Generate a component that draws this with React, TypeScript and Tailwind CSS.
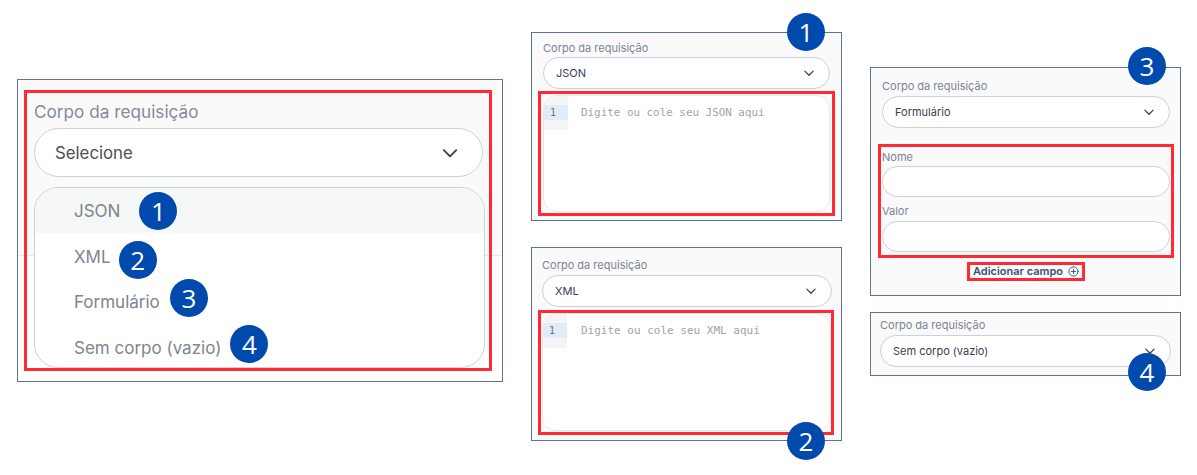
import React from "react";

function Badge({ n, className }: { n: number; className: string }) {
  return (
    <div className={`z-20 flex h-[38px] w-[38px] shrink-0 items-center justify-center rounded-full bg-[#004aad] text-[26px] leading-none text-white font-['Open_Sans',sans-serif] ${className}`}>
      {n}
    </div>
  );
}

function Chevron({ className }: { className: string }) {
  return (
    <svg viewBox="0 0 16 16" fill="none" stroke="#374151" strokeWidth="1.7" strokeLinecap="round" strokeLinejoin="round" className={className}>
      <path d="M2.5 5.5 8 11l5.5-5.5" />
    </svg>
  );
}

function SmallSelect({ value }: { value: string }) {
  return (
    <div className="flex h-[32px] w-full items-center justify-between rounded-full border border-[#cbd0dc] bg-white pl-[12px] pr-[14px] text-[11px] text-[#374151]">
      <span>{value}</span>
      <Chevron className="h-[12px] w-[12px]" />
    </div>
  );
}

function Label({ children, className = "" }: { children: React.ReactNode; className?: string }) {
  return <div className={`text-[11px] leading-[14px] text-[#7b8494] ${className}`}>{children}</div>;
}

function Editor({ text, className, textClass }: { text: string; className: string; textClass: string }) {
  return (
    <div className={`flex overflow-hidden rounded-[14px] border border-[#e8e9ed] bg-white ${className}`}>
      <div className="h-[34px] w-[24px] shrink-0 bg-[#f5f5f5] pt-[9px]">
        <div className="flex h-[15px] items-center bg-[#e2ecf7] pl-[6px] font-['DejaVu_Sans_Mono',monospace] text-[10px] text-[#6b7280]">1</div>
      </div>
      <div className={`pt-[9px] font-['DejaVu_Sans_Mono',monospace] leading-[15px] text-[#a3a3a3] ${textClass}`}>{text}</div>
    </div>
  );
}

function Option({ children, className = "" }: { children: React.ReactNode; className?: string }) {
  return <div className={`flex items-center pl-[39px] text-[17px] text-[#7e8490] ${className}`}>{children}</div>;
}

function Input() {
  return <div className="h-[31px] rounded-full border border-[#cbd0dc] bg-white" />;
}

const panel = "relative w-[311px] border border-[#5d7397] bg-[#fafafa]";
const red = "border-[3px] border-[#ff2a35]";

export default function App() {
  return (
    <div className="flex h-[475px] w-[1197px] gap-[28px] overflow-hidden bg-white pl-[17px] font-['Inter','Liberation_Sans',sans-serif]">
      {/* Selection panel */}
      <div className="pt-[79px]">
        <div className="h-[303px] w-[486px] border border-[#5d7397] bg-[linear-gradient(#fafafa_175px,#e8e8e8_175px,#e8e8e8_176px,#ffffff_176px)] pl-[6px] pt-[10px]">
          <div className={`h-[281px] w-[468px] pl-[7px] pt-[10px] ${red}`}>
            <div className="text-[17.2px] leading-[18px] text-[#838b99]">Corpo da requisição</div>
            <div className="mt-[7px] flex h-[49px] w-[449px] items-center justify-between rounded-full border border-[#cbd0dc] bg-white pl-[20px] pr-[23px] text-[16.8px] text-[#4b4f57]">
              <span className="pt-[2px]">Selecione</span>
              <Chevron className="h-[18px] w-[18px]" />
            </div>
            <div className="mt-[10px] h-[181px] w-[451px] overflow-hidden rounded-[24px] border border-[#cbd0dc] bg-white">
              <Option className="h-[45px] gap-[19px] bg-[#f6f7f7]">
                <span className="pt-[3px]">JSON</span>
                <Badge n={1} className="-my-[10px]" />
              </Option>
              <Option className="h-[46px] gap-[8px]">
                <span className="pt-[4px]">XML</span>
                <Badge n={2} className="-mb-[10px] -mt-[2px]" />
              </Option>
              <Option className="h-[44px] gap-[10px]">
                <span className="pt-[4px]">Formulário</span>
                <Badge n={3} className="-mb-[3px] -mt-[9px]" />
              </Option>
              <Option className="h-[48px] gap-[9px]">
                <span className="pt-[4px]">Sem corpo (vazio)</span>
                <Badge n={4} className="-mb-[3px] -mt-[9px]" />
              </Option>
            </div>
          </div>
        </div>
      </div>

      {/* Code editor panels */}
      <div className="flex flex-col gap-[26px] pt-[32px]">
        <div className={`${panel} h-[189px] px-[11px] pt-[8px]`}>
          <Label>Corpo da requisição</Label>
          <div className="mt-[2px]"><SmallSelect value="JSON" /></div>
          <div className={`-ml-[5px] mt-[2px] h-[125px] w-[297px] pl-[2px] pt-[1px] ${red}`}>
            <Editor text="Digite ou cole seu JSON aqui" className="h-[117px] w-[287px]" textClass="pl-[13px] text-[10.9px]" />
          </div>
          <Badge n={1} className="absolute -top-[20px] right-[16px]" />
        </div>
        <div className={`${panel} h-[194px] pl-[10px] pr-[9px] pt-[10px]`}>
          <Label>Corpo da requisição</Label>
          <div className="mt-[3px]"><SmallSelect value="XML" /></div>
          <div className={`-ml-[4px] mt-[3px] h-[125px] w-[296px] pl-[1px] ${red}`}>
            <Editor text="Digite ou cole seu XML aqui" className="h-[118px] w-[289px]" textClass="pl-[14px] text-[11px]" />
          </div>
          <Badge n={2} className="absolute -bottom-[20px] right-[16px]" />
        </div>
      </div>

      {/* Form panels */}
      <div className="flex flex-col gap-[16px] pt-[67px]">
        <div className={`${panel} h-[229px] pl-[11px] pr-[10px] pt-[11px]`}>
          <Label>Corpo da requisição</Label>
          <div className="mt-[3px]"><SmallSelect value="Formulário" /></div>
          <div className={`-ml-[4px] mt-[16px] h-[114px] w-[296px] px-[1px] pt-[3px] ${red}`}>
            <Label>Nome</Label>
            <div className="mt-[2px]"><Input /></div>
            <Label className="mt-[7px]">Valor</Label>
            <div className="mt-[3px]"><Input /></div>
          </div>
          <div className="mt-[4px] flex justify-center">
            <div className={`flex h-[19px] w-[118px] items-center justify-center gap-[5px] text-[11px] font-semibold text-[#3d5078] ${red}`}>
              <span>Adicionar campo</span>
              <svg viewBox="0 0 12 12" fill="none" stroke="#3d5078" strokeWidth="1" strokeLinecap="round" className="h-[11px] w-[11px]">
                <circle cx="6" cy="6" r="5" />
                <path d="M6 3.6v4.8M3.6 6h4.8" />
              </svg>
            </div>
          </div>
          <Badge n={3} className="absolute -top-[21px] right-[14px]" />
        </div>
        <div className={`${panel} h-[64px] px-[9px] pt-[5px]`}>
          <Label>Corpo da requisição</Label>
          <div className="mt-[3px]"><SmallSelect value="Sem corpo (vazio)" /></div>
          <Badge n={4} className="absolute -bottom-[16px] right-[14px]" />
        </div>
      </div>
    </div>
  );
}
